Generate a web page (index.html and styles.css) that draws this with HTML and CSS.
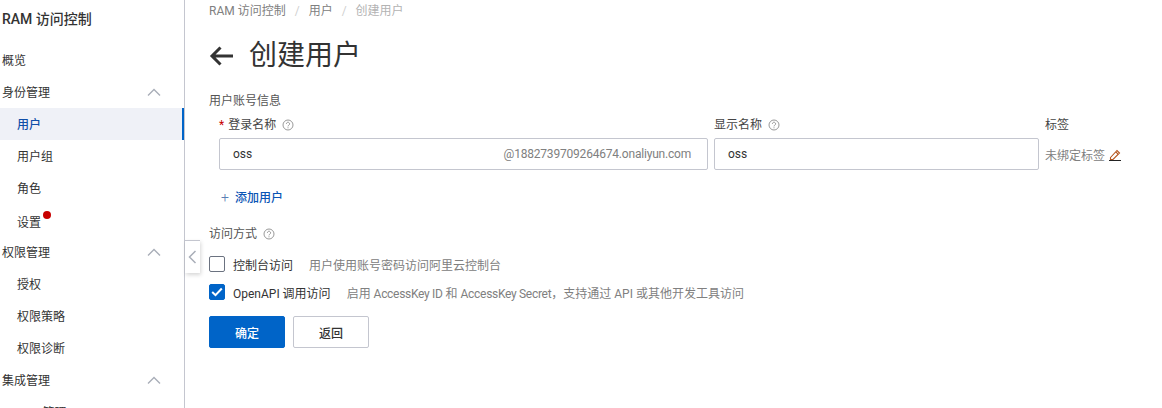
FILE: index.html
```html
<!DOCTYPE html>
<html lang="zh-CN">
<head>
    <meta charset="UTF-8">
    <meta name="viewport" content="width=device-width, initial-scale=1.0">
    <title>创建用户</title>
    <link rel="stylesheet" href="styles.css">
</head>
<body>
    <div class="page">
        <aside class="sidebar">
            <div class="side-title">RAM 访问控制</div>
            <nav class="side-nav">
                <a class="nav-top">概览</a>
                <a class="nav-top">身份管理
                    <svg class="chevron" width="14" height="8" viewBox="0 0 14 8"><path d="M1 7.5 7 1.500l6 6" fill="none" stroke="#a9aeb8" stroke-width="1.4"/></svg>
                </a>
                <a class="nav-sub active">用户</a>
                <a class="nav-sub">用户组</a>
                <a class="nav-sub">角色</a>
                <a class="nav-sub nav-dot"><span class="dot-label">设置</span></a>
                <a class="nav-top">权限管理
                    <svg class="chevron" width="14" height="8" viewBox="0 0 14 8"><path d="M1 7.5 7 1.500l6 6" fill="none" stroke="#a9aeb8" stroke-width="1.4"/></svg>
                </a>
                <a class="nav-sub">授权</a>
                <a class="nav-sub">权限策略</a>
                <a class="nav-sub">权限诊断</a>
                <a class="nav-top">集成管理
                    <svg class="chevron" width="14" height="8" viewBox="0 0 14 8"><path d="M1 7.5 7 1.500l6 6" fill="none" stroke="#a9aeb8" stroke-width="1.4"/></svg>
                </a>
                <a class="nav-sub">SSO 管理</a>
            </nav>
        </aside>

        <div class="collapse-handle">
            <svg width="9" height="14" viewBox="0 0 9 14"><path d="M7.5 1 1.500 7l6 6" fill="none" stroke="#a9aeb8" stroke-width="1.5"/></svg>
        </div>

        <main class="main">
            <div class="breadcrumb">
                <span>RAM 访问控制</span>
                <span class="sep">/</span>
                <span>用户</span>
                <span class="sep">/</span>
                <span class="current">创建用户</span>
            </div>

            <div class="page-head">
                <svg width="25" height="20" viewBox="0 0 25 20"><path d="M24 10H3M11.500 1.500 3 10l8.500 8.500" fill="none" stroke="#333" stroke-width="3"/></svg>
                <h1>创建用户</h1>
            </div>

            <div class="section-label">用户账号信息</div>

            <div class="user-fields">
                <div class="field-label"><span class="required">*</span>登录名称
                    <svg class="help" width="12" height="12" viewBox="0 0 12 12"><circle cx="6" cy="6" r="5" fill="none" stroke="#999"/><path d="M4.400 4.800a1.600 1.600 0 1 1 2.400 1.400c-.6.350-.8.600-.8 1.200M6 8.300v1" fill="none" stroke="#999"/></svg>
                </div>
                <div class="field-label">显示名称
                    <svg class="help" width="12" height="12" viewBox="0 0 12 12"><circle cx="6" cy="6" r="5" fill="none" stroke="#999"/><path d="M4.400 4.800a1.600 1.600 0 1 1 2.400 1.400c-.6.350-.8.600-.8 1.200M6 8.300v1" fill="none" stroke="#999"/></svg>
                </div>
                <div class="field-label">标签</div>

                <div class="input-box">
                    <span>oss</span>
                    <span class="suffix tight">@1882739709264674.onaliyun.com</span>
                </div>
                <div class="input-box"><span>oss</span></div>
                <div class="tag-cell">未绑定标签
                    <svg width="12" height="13" viewBox="0 0 12 13"><path d="M1.500 9.500 8 2.500l2.500 2.500-6.500 6.500H1.500zM6.800 3.800l2.500 2.500" fill="none" stroke="#b5541c" stroke-width="1.100"/><path d="M0 12.500h12" stroke="#222"/></svg>
                </div>
            </div>

            <a class="add-user"><span class="plus">+</span>添加用户</a>

            <div class="section-label access-label">访问方式
                <svg class="help" width="12" height="12" viewBox="0 0 12 12"><circle cx="6" cy="6" r="5" fill="none" stroke="#999"/><path d="M4.400 4.800a1.600 1.600 0 1 1 2.400 1.400c-.6.350-.8.600-.8 1.200M6 8.300v1" fill="none" stroke="#999"/></svg>
            </div>

            <div class="check-row">
                <span class="checkbox"></span>
                <span class="check-name">控制台访问</span>
                <span class="check-desc">用户使用账号密码访问阿里云控制台</span>
            </div>
            <div class="check-row">
                <span class="checkbox checked">
                    <svg width="12" height="10" viewBox="0 0 12 10"><path d="M1.200 5 4.500 8.200 10.800 1.500" fill="none" stroke="#fff" stroke-width="2"/></svg>
                </span>
                <span class="check-name">OpenAPI 调用访问</span>
                <span class="check-desc">启用 <span class="tight">AccessKey ID</span> 和 <span class="tight">AccessKey Secret</span>，支持通过 API 或其他开发工具访问</span>
            </div>

            <div class="actions">
                <button class="btn btn-primary">确定</button>
                <button class="btn">返回</button>
            </div>
        </main>
    </div>
</body>
</html>
```

FILE: styles.css
```css
* {
    box-sizing: border-box;
}

html, body {
    margin: 0;
    padding: 0;
    height: 408px;
    overflow: hidden;
    background-color: #fff;
}

body {
    font-family: Roboto, "Noto Sans CJK SC", sans-serif;
    font-size: 12px;
    color: #333;
}

.page {
    position: relative;
    display: flex;
    height: 408px;
    overflow: hidden;
}

/* sidebar */
.sidebar {
    width: 185px;
    flex-shrink: 0;
    border-right: 1px solid #c4c6cf;
}

.side-title {
    height: 44px;
    padding: 11px 0 0 2px;
    font-size: 14px;
    line-height: 16px;
    font-weight: 500;
}

.side-nav a {
    display: flex;
    align-items: center;
    justify-content: space-between;
    height: 32px;
    padding-bottom: 2px;
    color: #333;
}

.nav-top {
    padding: 0 23px 0 2px;
}

.nav-sub {
    padding-left: 17px;
}

.side-nav .chevron {
    margin-top: 2px;
}

.side-nav .nav-sub.active {
    background-color: #eff1f7;
    border-right: 2px solid #0064c8;
    color: #0f4ea8;
    font-weight: 500;
}

.side-nav .nav-dot {
    padding-top: 3px;
    padding-bottom: 0;
}

.dot-label {
    position: relative;
}

.dot-label::after {
    content: "";
    position: absolute;
    top: -2px;
    right: -10px;
    width: 8px;
    height: 8px;
    border-radius: 50%;
    background-color: #c80000;
}

.collapse-handle {
    position: absolute;
    left: 185px;
    top: 240px;
    width: 15px;
    height: 33px;
    display: flex;
    align-items: center;
    justify-content: center;
    background-color: #fff;
    border-top: 1px solid #c4c6cf;
    box-shadow: 1px 2px 4px rgba(0, 0, 0, 0.16);
}

/* main */
.main {
    flex: 1;
    padding-left: 24px;
    min-width: 0;
}

.breadcrumb {
    display: flex;
    height: 20px;
    padding-top: 1px;
    line-height: 20px;
    color: #808080;
}

.breadcrumb .sep {
    margin: 0 9px;
    color: #d0d0d0;
}

.breadcrumb .current {
    color: #b3b3b3;
}

.page-head {
    display: flex;
    align-items: center;
    gap: 15px;
    height: 40px;
    margin-top: 16px;
}

.page-head h1 {
    margin: 0;
    font-size: 28px;
    line-height: 40px;
    font-weight: 400;
}

.section-label {
    height: 16px;
    margin-top: 17px;
    line-height: 16px;
    color: #555;
}

.help {
    margin-left: 3px;
    vertical-align: -2px;
}

.user-fields {
    display: grid;
    grid-template-columns: 489px 325px auto;
    grid-template-rows: 29px 32px;
    column-gap: 6px;
    margin: 0 0 0 10px;
}

.field-label {
    padding-top: 6px;
    line-height: 20px;
    color: #444;
}

.required {
    margin-right: 4px;
    color: #c80000;
}

.input-box {
    display: flex;
    align-items: center;
    justify-content: space-between;
    padding: 0 16px 0 13px;
    border: 1px solid #c4c6cf;
    border-radius: 2px;
}

.suffix {
    color: #808080;
}

.tight {
    letter-spacing: -0.2px;
}

.check-desc .tight {
    letter-spacing: -0.3px;
}

.tag-cell {
    display: flex;
    align-items: center;
    gap: 4px;
    color: #808080;
}

.add-user {
    display: block;
    margin: 19px 0 0 12px;
    height: 16px;
    line-height: 16px;
    color: #0a55b5;
    font-weight: 500;
}

.plus {
    margin-right: 6px;
    font-size: 14px;
    font-weight: 300;
    color: #5a7fb5;
}

.access-label {
    margin-top: 21px;
}

.check-row {
    display: flex;
    align-items: center;
    height: 16px;
    margin-top: 14px;
}

.check-row + .check-row {
    margin-top: 12px;
}

.checkbox {
    display: flex;
    align-items: center;
    justify-content: center;
    width: 16px;
    height: 16px;
    margin-right: 8px;
    border: 1px solid #6b7280;
    border-radius: 2px;
}

.checkbox.checked {
    background-color: #0064c8;
    border-color: #0064c8;
}

.check-name {
    margin-right: 16px;
}

.check-desc {
    color: #808080;
}

.actions {
    display: flex;
    gap: 8px;
    margin-top: 16px;
}

.btn {
    width: 76px;
    height: 32px;
    padding: 0;
    font-family: inherit;
    font-size: 12px;
    font-weight: 500;
    color: #333;
    background-color: #fff;
    border: 1px solid #c4c6cf;
    border-radius: 2px;
}

.btn-primary {
    color: #fff;
    background-color: #0064c8;
    border-color: #0064c8;
}
```
